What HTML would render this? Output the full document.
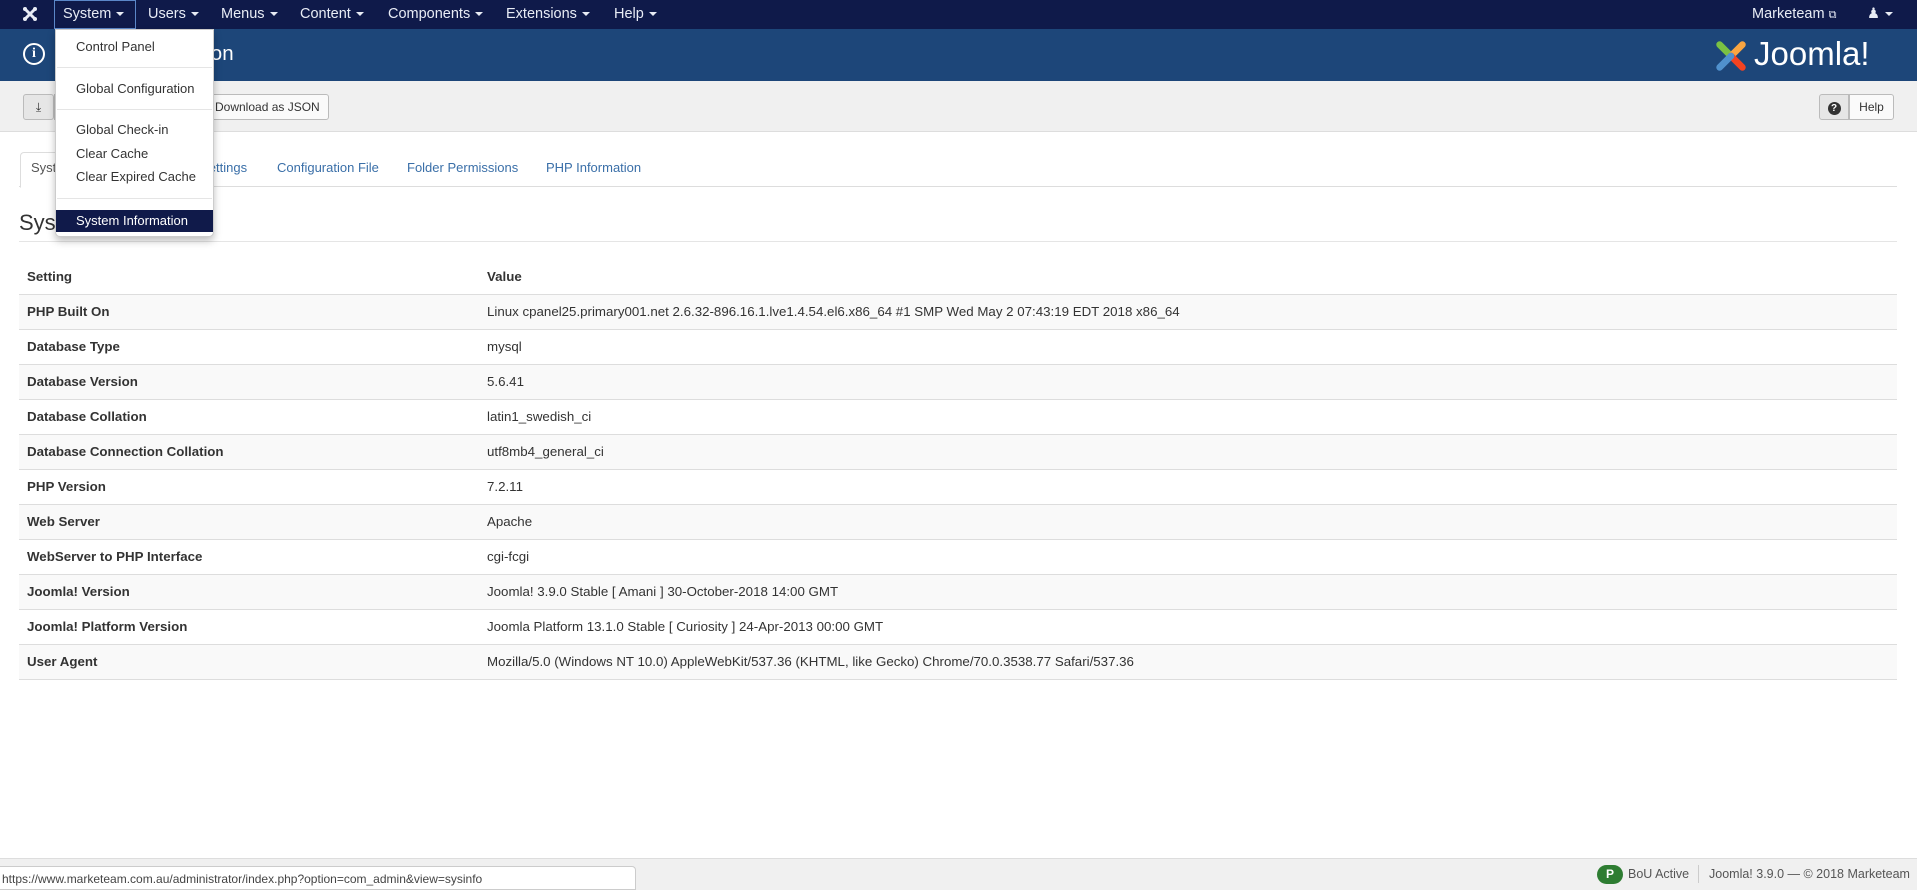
<!DOCTYPE html>
<html><head><meta charset="utf-8"><style>
*{box-sizing:border-box;margin:0;padding:0}
body{width:1917px;height:890px;overflow:hidden;background:#fff;font-family:"Liberation Sans",Arial,sans-serif;font-size:14px;color:#333;position:relative}
.abs{position:absolute}
#nav{left:0;top:0;width:1917px;height:29px;background:#0f1a4a}
.ni{position:absolute;top:0;height:29px;line-height:28px;color:#e8ecf5;font-size:14.5px}
.car{display:inline-block;width:0;height:0;border-left:4px solid transparent;border-right:4px solid transparent;border-top:4px solid #e8ecf5;vertical-align:middle;margin-left:5px}
#hdr{left:0;top:29px;width:1917px;height:52px;background:#1d4679}
#tb{left:0;top:81px;width:1917px;height:51px;background:#f0f0f0;border-bottom:1px solid #ddd}
.btn{position:absolute;border:1px solid #bbb;border-radius:3px;background:#fafafa;height:26px;font-size:12px;line-height:24px;color:#333}
#dd{left:55px;top:29px;width:159px;height:208px;background:#fff;border:1px solid #ccc;border-radius:0 0 5px 5px;box-shadow:0 4px 8px rgba(0,0,0,.25)}
.di{position:absolute;left:20px;font-size:13px;color:#333}
.dv{position:absolute;left:1px;right:1px;height:1px;background:#e5e5e5}
.tab{position:absolute;top:160px;font-size:13px;color:#3a6fa8}
table{position:absolute;left:19px;top:259px;width:1878px;border-collapse:collapse;font-size:13.3px}
td,th{height:35px;padding:0 8px;text-align:left;border-top:1px solid #ddd}
th{border-top:none;font-weight:bold}
td:first-child{font-weight:bold;width:460px}
tr:nth-child(even) td{background:#f9f9f9}
tr:last-child td{border-bottom:1px solid #ddd}
#ft{left:0;top:858px;width:1917px;height:32px;background:#f0f0f0;border-top:1px solid #ddd}
</style></head><body>
<div id="nav" class="abs">
 <svg class="abs" style="left:22px;top:6px" width="16" height="16" viewBox="0 0 16 16"><g stroke="#e8ecf5" stroke-width="3" fill="none" stroke-linecap="round"><path d="M3 3 L13 13 M13 3 L3 13"/></g><circle cx="3" cy="3" r="2" fill="#e8ecf5"/><circle cx="13" cy="3" r="2" fill="#e8ecf5"/><circle cx="3" cy="13" r="2" fill="#e8ecf5"/><circle cx="13" cy="13" r="2" fill="#e8ecf5"/></svg>
 <div class="ni" style="left:54px;width:82px;border:1px solid #5b87c8;padding-left:8px;line-height:26px">System<span class="car"></span></div>
 <div class="ni" style="left:148px">Users<span class="car"></span></div>
 <div class="ni" style="left:221px">Menus<span class="car"></span></div>
 <div class="ni" style="left:300px">Content<span class="car"></span></div>
 <div class="ni" style="left:388px">Components<span class="car"></span></div>
 <div class="ni" style="left:506px">Extensions<span class="car"></span></div>
 <div class="ni" style="left:614px">Help<span class="car"></span></div>
 <div class="ni" style="left:1752px">Marketeam <span style="font-size:11px">⧉</span></div>
 <div class="ni" style="left:1867px">&#9823;<span class="car"></span></div>
</div>
<div id="hdr" class="abs">
 <div class="abs" style="left:23px;top:14px;width:22px;height:22px;border-radius:50%;border:2px solid #fff;color:#fff;font-weight:bold;font-size:14px;text-align:center;line-height:18px;font-family:'Liberation Serif',serif">i</div>
 <div class="abs" style="left:57px;top:13px;color:#fff;font-size:20.5px">System Information</div>
 <svg class="abs" style="left:1712px;top:8px" width="38" height="38" viewBox="0 0 40 40"><g stroke-width="7" stroke-linecap="round" fill="none"><path d="M8 8 L20 20" stroke="#7ac143"/><path d="M32 8 L20 20" stroke="#f9a541"/><path d="M32 32 L20 20" stroke="#f44321"/><path d="M8 32 L20 20" stroke="#5091cd"/></g></svg>
 <div class="abs" style="left:1754px;top:6px;color:#fff;font-size:33px;font-weight:300">Joomla!</div>
</div>
<div id="tb" class="abs">
 <div class="btn" style="left:23px;top:13px;width:31px;text-align:center;background:#e6e6e6">&#10515;</div>
 <div class="btn" style="left:54px;top:13px;width:275px;padding-left:160px;border-radius:0 3px 3px 0">Download as JSON</div>
 <div class="btn" style="left:1819px;top:13px;width:30px;text-align:center;background:#e6e6e6;border-radius:3px 0 0 3px"><span style="display:inline-block;width:13px;height:13px;border-radius:50%;background:#333;color:#fff;font-size:10px;line-height:13px;font-weight:bold">?</span></div>
 <div class="btn" style="left:1849px;top:13px;width:45px;text-align:center;border-radius:0 3px 3px 0">Help</div>
</div>
<div class="abs" style="left:19px;top:152px;width:1878px;height:35px;border-bottom:1px solid #ddd"></div>
<div class="abs" style="left:20px;top:152px;width:130px;height:36px;border:1px solid #ddd;border-bottom-color:#fff;border-radius:4px 4px 0 0;background:#fff"></div>
<div class="tab" style="left:31px;color:#555">System Information</div>
<div class="tab" style="left:170px">PHP Settings</div>
<div class="tab" style="left:277px">Configuration File</div>
<div class="tab" style="left:407px">Folder Permissions</div>
<div class="tab" style="left:546px">PHP Information</div>
<div class="abs" style="left:19px;top:210px;font-size:22px;color:#333">System Information</div>
<div class="abs" style="left:19px;top:241px;width:1878px;height:1px;background:#e5e5e5"></div>
<table>
<tr><th>Setting</th><th>Value</th></tr>
<tr><td>PHP Built On</td><td>Linux cpanel25.primary001.net 2.6.32-896.16.1.lve1.4.54.el6.x86_64 #1 SMP Wed May 2 07:43:19 EDT 2018 x86_64</td></tr>
<tr><td>Database Type</td><td>mysql</td></tr>
<tr><td>Database Version</td><td>5.6.41</td></tr>
<tr><td>Database Collation</td><td>latin1_swedish_ci</td></tr>
<tr><td>Database Connection Collation</td><td>utf8mb4_general_ci</td></tr>
<tr><td>PHP Version</td><td>7.2.11</td></tr>
<tr><td>Web Server</td><td>Apache</td></tr>
<tr><td>WebServer to PHP Interface</td><td>cgi-fcgi</td></tr>
<tr><td>Joomla! Version</td><td>Joomla! 3.9.0 Stable [ Amani ] 30-October-2018 14:00 GMT</td></tr>
<tr><td>Joomla! Platform Version</td><td>Joomla Platform 13.1.0 Stable [ Curiosity ] 24-Apr-2013 00:00 GMT</td></tr>
<tr><td>User Agent</td><td>Mozilla/5.0 (Windows NT 10.0) AppleWebKit/537.36 (KHTML, like Gecko) Chrome/70.0.3538.77 Safari/537.36</td></tr>
</table>
<div id="dd" class="abs">
 <div class="di" style="top:9px">Control Panel</div>
 <div class="dv" style="top:37px"></div>
 <div class="di" style="top:51px">Global Configuration</div>
 <div class="dv" style="top:79px"></div>
 <div class="di" style="top:92px">Global Check-in</div>
 <div class="di" style="top:116px">Clear Cache</div>
 <div class="di" style="top:139px">Clear Expired Cache</div>
 <div class="dv" style="top:168px"></div>
 <div class="abs" style="left:0;right:0;top:180px;height:22px;background:#101a4a"></div>
 <div class="di" style="top:183px;color:#fff">System Information</div>
</div>
<div id="ft" class="abs">
 <div class="abs" style="left:1597px;top:6px;width:26px;height:19px;border-radius:10px;background:#2e7d32;color:#fff;text-align:center;font-size:12px;line-height:19px;font-weight:bold">P</div>
 <div class="abs" style="left:1628px;top:8px;font-size:12.5px;color:#555">BoU Active</div>
 <div class="abs" style="left:1698px;top:6px;width:1px;height:18px;background:#ccc"></div>
 <div class="abs" style="left:1709px;top:8px;font-size:12.5px;color:#555">Joomla! 3.9.0 — © 2018 Marketeam</div>
</div>
<div class="abs" style="left:0;top:866px;width:636px;height:24px;background:#fff;border:1px solid #ccc;border-left:none;border-radius:0 4px 0 0;font-size:12px;color:#444;padding:5px 2px">https://www.marketeam.com.au/administrator/index.php?option=com_admin&amp;view=sysinfo</div>
</body></html>
